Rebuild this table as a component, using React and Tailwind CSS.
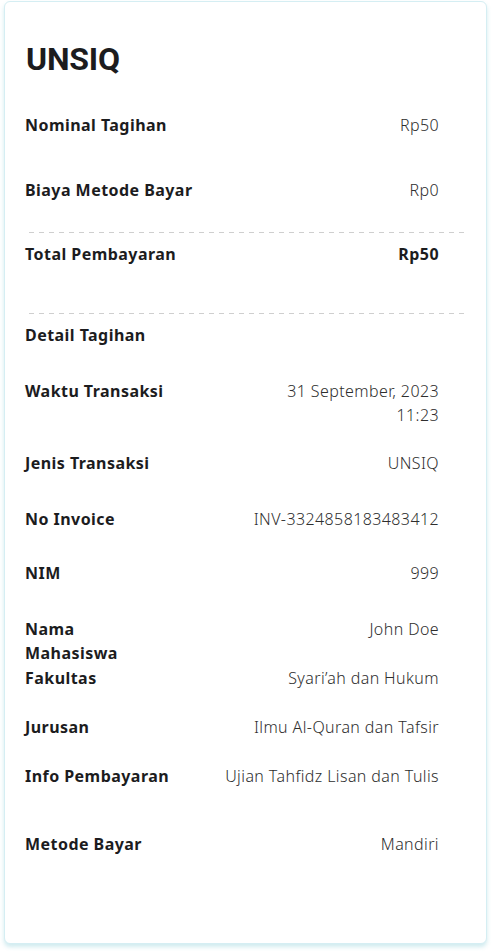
const detailRows = [
  { label: 'Jenis Transaksi', value: 'UNSIQ', mt: 'mt-[24px]' },
  { label: 'No Invoice', value: 'INV-3324858183483412', mt: 'mt-[32px]' },
  { label: 'NIM', value: '999', mt: 'mt-[30px]' },
]

function Row({ label, value, className = '', bold = false }) {
  return (
    <div className={`flex justify-between items-start leading-[24px] text-[16px] ${className}`}>
      <div className="font-bold text-[#1c1c1e] tracking-[0.45px]">{label}</div>
      <div className={`text-right ${bold ? 'font-bold text-[#1c1c1e] tracking-[0.45px]' : 'font-light text-[#2e2e2e] tracking-[0.4px]'}`}>{value}</div>
    </div>
  )
}

function Dashed({ className = '' }) {
  return (
    <div className={`h-px ml-[4px] mr-[-28px] bg-[repeating-linear-gradient(to_right,#cfcfcf_0,#cfcfcf_5px,transparent_5px,transparent_10px)] ${className}`} />
  )
}

export default function App() {
  return (
    <div className="w-[492px] h-[952px] bg-white pl-[4px] pr-[5px] pt-px" style={{ fontFamily: '"Noto Sans", "Open Sans", sans-serif' }}>
      <div className="h-[943px] rounded-md border border-[#d5eef3] bg-white shadow-[0_3px_4px_rgba(150,210,220,0.45)] pl-[20px] pr-[47px]">
        <h1 className="mt-[39px] ml-[1px] text-[32px] leading-[36px] font-bold text-[#1c1c1e] tracking-[-0.2px]" style={{ fontFamily: 'Roboto, sans-serif' }}>
          UNSIQ
        </h1>

        <Row label="Nominal Tagihan" value="Rp50" className="mt-[36px]" />
        <Row label="Biaya Metode Bayar" value="Rp0" className="mt-[41px]" />
        <Dashed className="mt-[30px]" />
        <Row label="Total Pembayaran" value="Rp50" bold className="mt-[9px]" />
        <Dashed className="mt-[47px]" />

        <div className="mt-[9px] text-[16px] leading-[24px] font-bold text-[#1c1c1e] tracking-[0.45px]">Detail Tagihan</div>

        <Row
          label="Waktu Transaksi"
          value={<><span className="block">31 September, 2023</span><span className="block">11:23</span></>}
          className="mt-[32px]"
        />

        {detailRows.map((r) => (
          <Row key={r.label} label={r.label} value={r.value} className={r.mt} />
        ))}

        <Row
          label={<><span className="block">Nama</span><span className="block">Mahasiswa</span></>}
          value="John Doe"
          className="mt-[32px]"
        />
        <Row label="Fakultas" value="Syari’ah dan Hukum" className="mt-[1px]" />
        <Row label="Jurusan" value="Ilmu Al-Quran dan Tafsir" className="mt-[25px]" />
        <Row label="Info Pembayaran" value="Ujian Tahfidz Lisan dan Tulis" className="mt-[25px]" />
        <Row label="Metode Bayar" value="Mandiri" className="mt-[44px]" />
      </div>
    </div>
  )
}
